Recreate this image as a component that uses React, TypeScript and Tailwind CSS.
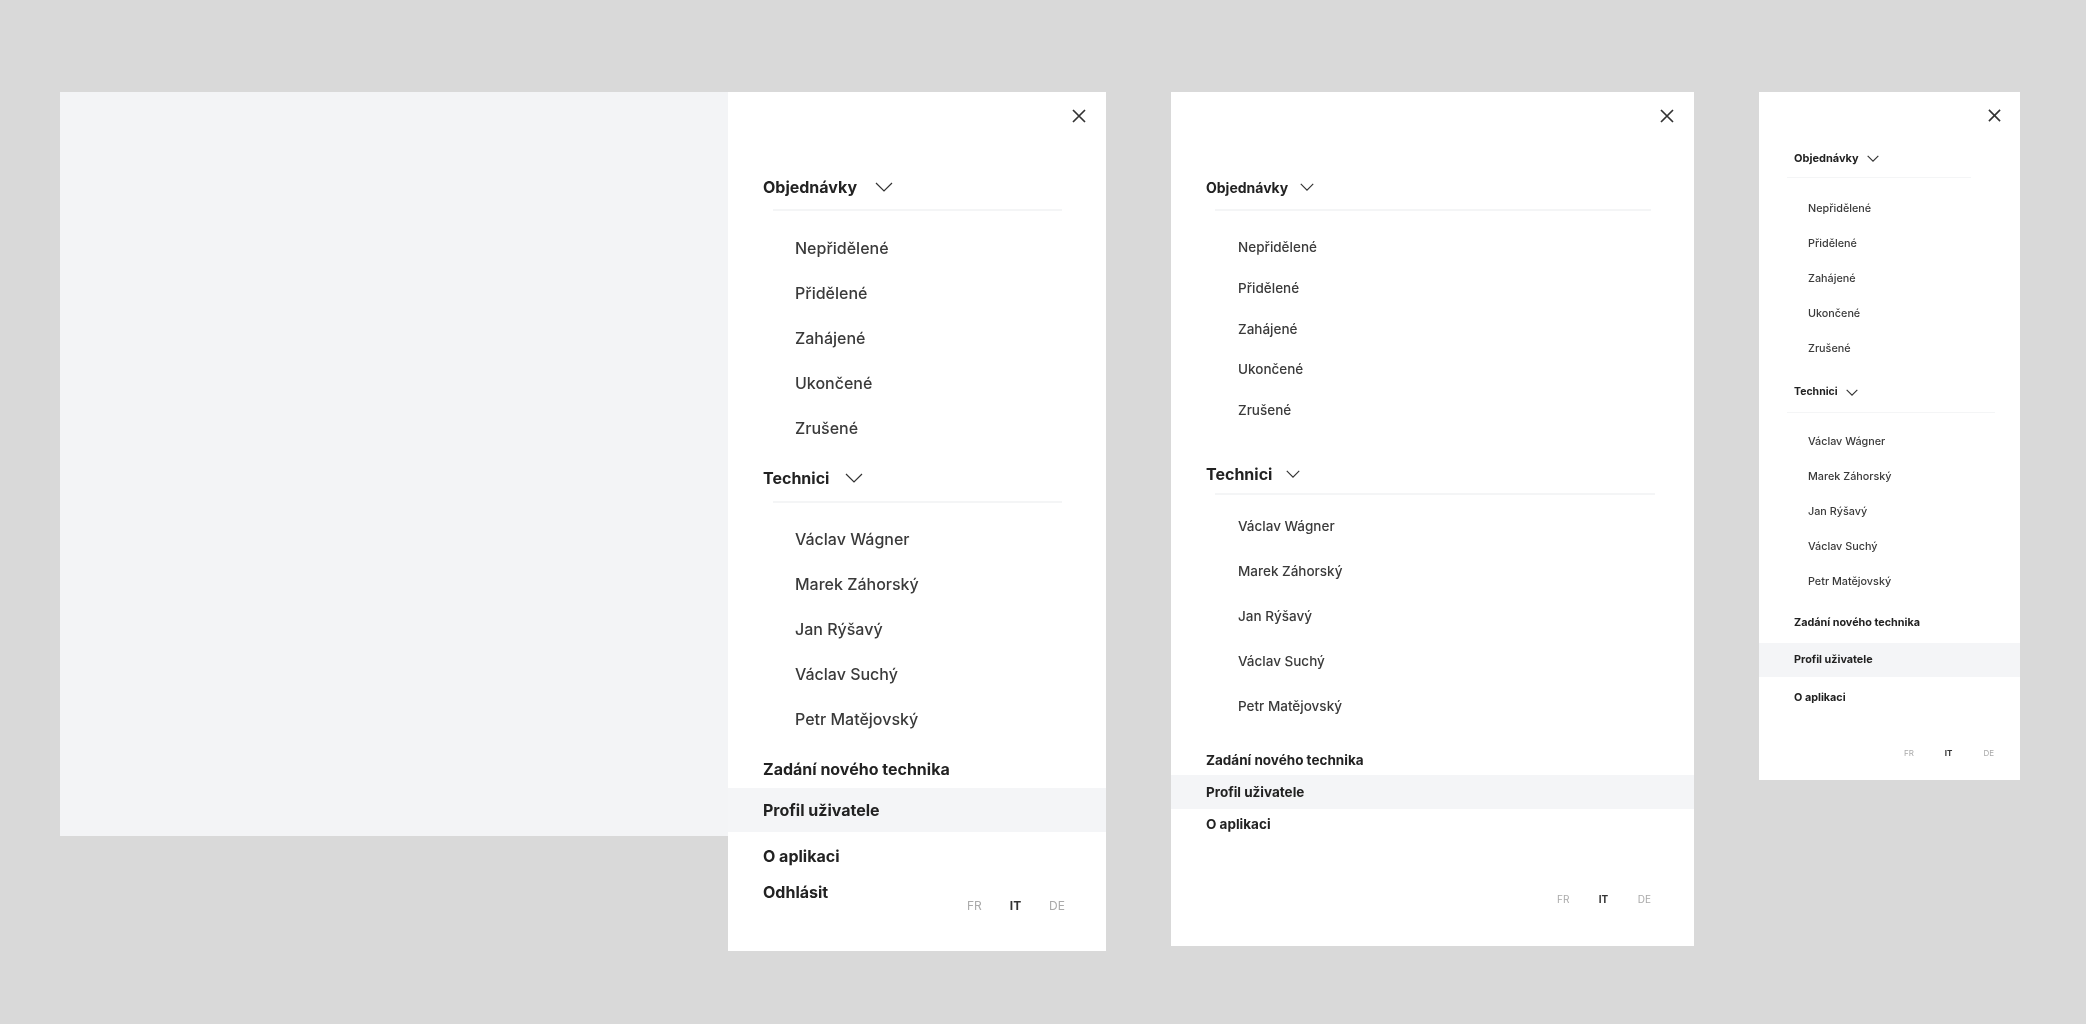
const font = { fontFamily: 'Inter, "Liberation Sans", sans-serif' };

function CloseIcon({ className }: { className: string }) {
  return (
    <svg viewBox="0 0 14 14" className={className} fill="none" stroke="#333333" strokeWidth="1.7">
      <path d="M1 1l12 12M13 1L1 13" />
    </svg>
  );
}

function Chevron({ className, stroke }: { className: string; stroke: number }) {
  return (
    <svg viewBox="0 0 18 10" className={className} fill="none" stroke="#333333" strokeWidth={stroke}>
      <path d="M1 1l8 8 8-8" />
    </svg>
  );
}

function Lang({ className }: { className: string }) {
  return (
    <div className={"flex items-center justify-between text-[#aaaaaa] " + className}>
      <span>FR</span>
      <span className="font-bold text-[#333333]">IT</span>
      <span>DE</span>
    </div>
  );
}

const orders = ["Nepřidělené", "Přidělené", "Zahájené", "Ukončené", "Zrušené"];
const techs = ["Václav Wágner", "Marek Záhorský", "Jan Rýšavý", "Václav Suchý", "Petr Matějovský"];

export default function App() {
  return (
    <div style={font} className="min-h-screen w-full overflow-hidden bg-[#d9d9d9] flex items-start pt-[92px] pl-[60px] text-[#222222]">
      <div className="w-[668px] h-[744px] bg-[#f3f4f6] shrink-0 blur-[0.6px]" />

      {/* large panel */}
      <div className="w-[378px] h-[859px] bg-white shrink-0 blur-[0.6px]">
        <div className="h-[47px] flex items-center justify-end pr-[20px]">
          <CloseIcon className="w-[14px] h-[14px]" />
        </div>
        <div className="mt-[36px] h-[24px] pl-[35px] flex items-center gap-[18px] text-[16px] font-bold">
          <span>Objednávky</span>
          <Chevron className="w-[18px] h-[10px]" stroke={1.2} />
        </div>
        <div className="mt-[10px] ml-[45px] w-[289px] h-[2px] bg-[#f4f5f6]" />
        <div className="mt-[14px] pl-[67px] text-[16px] font-medium text-[#3a3a3a]">
          {orders.map((t) => (
            <div key={t} className="h-[45px] flex items-center">{t}</div>
          ))}
        </div>
        <div className="mt-[16px] h-[24px] pl-[35px] flex items-center gap-[16px] text-[16px] font-bold">
          <span>Technici</span>
          <Chevron className="w-[18px] h-[10px]" stroke={1.2} />
        </div>
        <div className="mt-[11px] ml-[45px] w-[289px] h-[2px] bg-[#f4f5f6]" />
        <div className="mt-[13px] pl-[67px] text-[16px] font-medium text-[#3a3a3a]">
          {techs.map((t) => (
            <div key={t} className="h-[45px] flex items-center">{t}</div>
          ))}
        </div>
        <div className="text-[16px] font-bold">
          <div className="mt-[16px] h-[24px] pl-[35px] flex items-center">Zadání nového technika</div>
          <div className="mt-[7px] h-[44px] pl-[35px] flex items-center bg-[#f4f5f7]">Profil uživatele</div>
          <div className="mt-[12px] h-[24px] pl-[35px] flex items-center">O aplikaci</div>
          <div className="mt-[12px] pl-[35px] pr-[41px] flex items-start justify-between">
            <div className="h-[24px] flex items-center">Odhlásit</div>
            <Lang className="mt-[16px] h-[20px] w-[98px] text-[12px] font-normal" />
          </div>
        </div>
      </div>

      {/* medium panel */}
      <div className="ml-[65px] w-[523px] h-[854px] bg-white shrink-0 blur-[0.6px]">
        <div className="h-[47px] flex items-center justify-end pr-[20px]">
          <CloseIcon className="w-[14px] h-[14px]" />
        </div>
        <div className="mt-[36px] h-[24px] pl-[35px] flex items-center gap-[12px] text-[14px] font-bold">
          <span>Objednávky</span>
          <Chevron className="w-[14px] h-[8px]" stroke={1.5} />
        </div>
        <div className="mt-[10px] ml-[44px] w-[436px] h-[2px] bg-[#f4f5f6]" />
        <div className="mt-[16px] pl-[67px] text-[13.5px] font-medium text-[#3a3a3a]">
          {orders.map((t) => (
            <div key={t} className="h-[40.7px] flex items-center">{t}</div>
          ))}
        </div>
        <div className="mt-[32px] h-[24px] pl-[35px] flex items-center gap-[14px] text-[16px] font-bold">
          <span>Technici</span>
          <Chevron className="w-[14px] h-[8px]" stroke={1.5} />
        </div>
        <div className="mt-[7px] ml-[44px] w-[440px] h-[2px] bg-[#f4f5f6]" />
        <div className="mt-[8px] pl-[67px] text-[13.5px] font-medium text-[#3a3a3a]">
          {techs.map((t) => (
            <div key={t} className="h-[45px] flex items-center">{t}</div>
          ))}
        </div>
        <div className="text-[13.5px] font-bold">
          <div className="mt-[22px] h-[20px] pl-[35px] flex items-center">Zadání nového technika</div>
          <div className="mt-[5px] h-[34px] pl-[35px] flex items-center bg-[#f4f5f7]">Profil uživatele</div>
          <div className="mt-[5px] h-[20px] pl-[35px] flex items-center">O aplikaci</div>
        </div>
        <div className="mt-[55px] flex justify-end pr-[43px]">
          <Lang className="h-[20px] w-[94px] text-[10px] font-normal" />
        </div>
      </div>

      {/* small panel */}
      <div className="ml-[65px] w-[261px] h-[688px] bg-white shrink-0 blur-[0.6px]">
        <div className="h-[47px] flex items-center justify-end pr-[19px]">
          <CloseIcon className="w-[13px] h-[13px]" />
        </div>
        <div className="mt-[9px] h-[20px] pl-[35px] flex items-center gap-[8px] text-[11px] font-bold">
          <span>Objednávky</span>
          <Chevron className="w-[12px] h-[7px]" stroke={1.7} />
        </div>
        <div className="mt-[9px] ml-[28px] w-[184px] h-[1px] bg-[#f4f5f6]" />
        <div className="mt-[14px] pl-[49px] text-[10.8px] font-medium text-[#3a3a3a]">
          {orders.map((t) => (
            <div key={t} className="h-[35px] flex items-center">{t}</div>
          ))}
        </div>
        <div className="mt-[15px] h-[20px] pl-[35px] flex items-center gap-[8px] text-[10.5px] font-bold">
          <span>Technici</span>
          <Chevron className="w-[12px] h-[7px]" stroke={1.7} />
        </div>
        <div className="mt-[10px] ml-[28px] w-[208px] h-[1px] bg-[#f4f5f6]" />
        <div className="mt-[12px] pl-[49px] text-[10.8px] font-medium text-[#3a3a3a]">
          {techs.map((t) => (
            <div key={t} className="h-[35px] flex items-center">{t}</div>
          ))}
        </div>
        <div className="text-[10.8px] font-bold">
          <div className="mt-[13px] h-[20px] pl-[35px] flex items-center">Zadání nového technika</div>
          <div className="mt-[10px] h-[34px] pl-[35px] flex items-center bg-[#f4f5f7]">Profil uživatele</div>
          <div className="mt-[11px] h-[20px] pl-[35px] flex items-center">O aplikaci</div>
        </div>
        <div className="mt-[35px] flex justify-end pr-[26px]">
          <Lang className="h-[20px] w-[90px] text-[8px] font-normal" />
        </div>
      </div>
    </div>
  );
}
